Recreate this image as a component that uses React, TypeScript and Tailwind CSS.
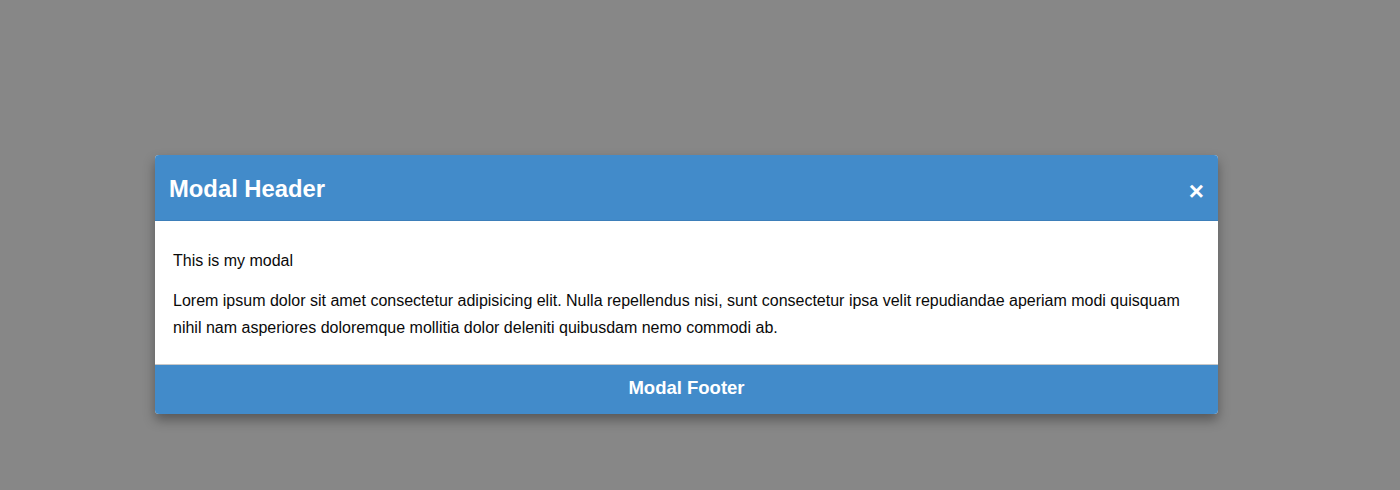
export default function App() {
  return (
    <div className="h-[490px] w-full bg-[#878787] pt-[155px] font-['Liberation_Sans',Arial,sans-serif]">
      <div className="ml-[155px] w-[1063px] overflow-hidden rounded-[4px] bg-white shadow-[0_6px_12px_rgba(0,0,0,0.35)]">
        <div className="flex h-[66px] items-center justify-between border-b border-[#3d7fba] bg-[#428bca] pl-[14px] pr-[14px] text-white">
          <h2 className="mt-[3px] text-[23.8px] font-bold">Modal Header</h2>
          <button className="mt-[7px] text-[26px] font-bold leading-none">×</button>
        </div>
        <div className="border-b border-[#c8c8c8] px-[18px] pt-[26px] pb-[23px] text-[16px] leading-[27px] text-[#0a0a0a]">
          <p className="mb-[13px]">This is my modal</p>
          <p>
            Lorem ipsum dolor sit amet consectetur adipisicing elit. Nulla repellendus nisi, sunt consectetur ipsa velit
            repudiandae aperiam modi quisquam nihil nam asperiores doloremque mollitia dolor deleniti quibusdam nemo
            commodi ab.
          </p>
        </div>
        <div className="flex h-[49px] items-center justify-center bg-[#428bca] pb-[4px] text-[18.5px] font-bold text-white">
          Modal Footer
        </div>
      </div>
    </div>
  );
}
